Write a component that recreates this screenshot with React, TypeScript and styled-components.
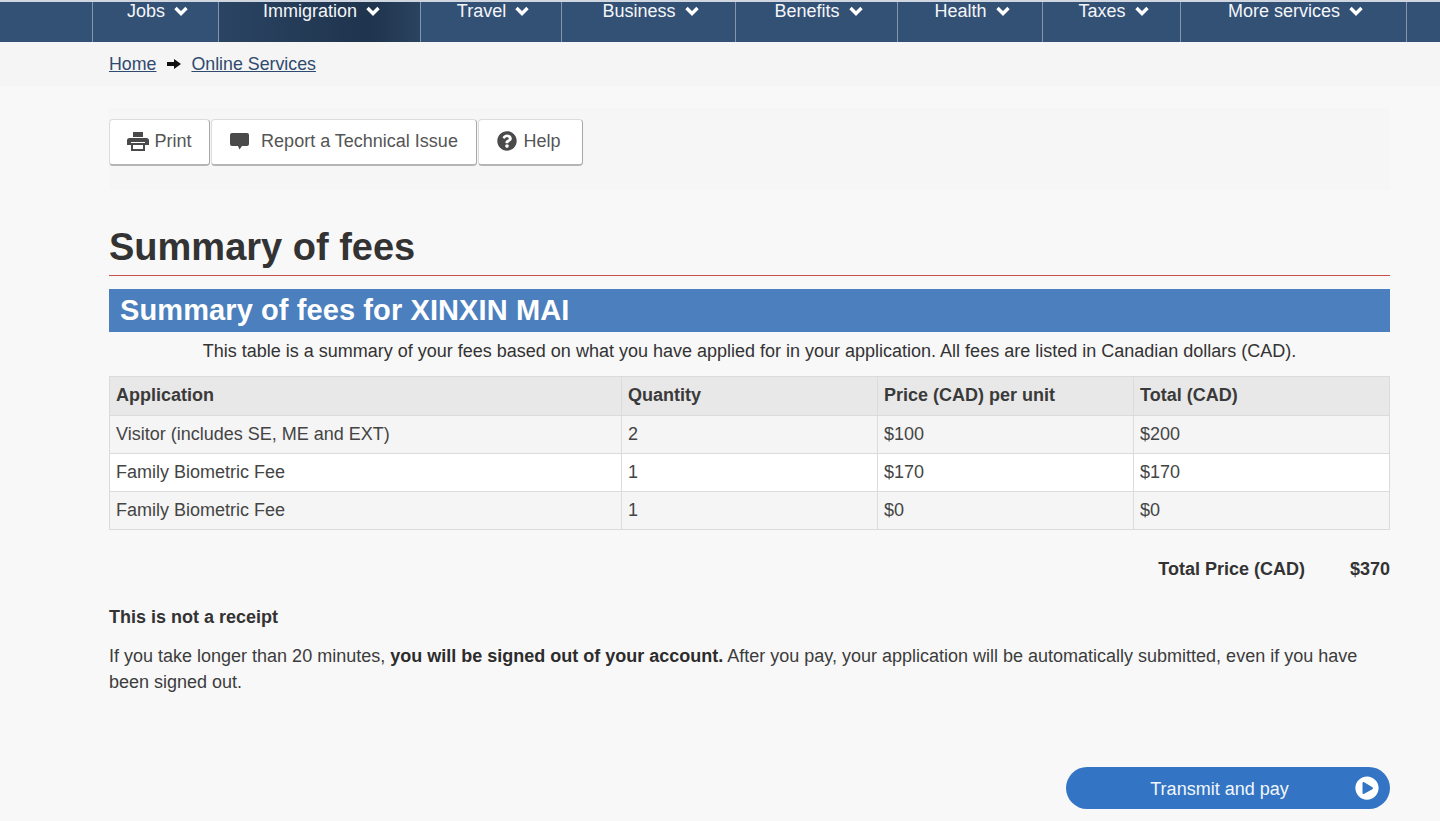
import React from 'react';
import styled, { createGlobalStyle } from 'styled-components';
import { FaPlayCircle, FaQuestionCircle } from 'react-icons/fa';

const GlobalStyle = createGlobalStyle`
  html, body {
    margin: 0;
    padding: 0;
    background: #f8f8f8;
    font-family: "Liberation Sans", Arial, sans-serif;
    color: #333;
  }
`;

const Page = styled.div`
  width: 1440px;
  height: 821px;
  overflow: hidden;
`;

const Nav = styled.nav`
  display: flex;
  height: 40px;
  padding-left: 92px;
  background: #335075;
  border-top: 2px solid #cfd6df;
  border-bottom: 1px solid #c9d8ea;
  margin-bottom: -1px;
`;

const NavItem = styled.a<{ $w: number; $active?: boolean }>`
  display: flex;
  justify-content: center;
  gap: 9px;
  box-sizing: border-box;
  width: ${(p) => p.$w}px;
  padding-left: 4px;
  line-height: 18px;
  font-size: 18px;
  color: #f4f6f9;
  border-left: 1px solid #8496ad;
  background: ${(p) =>
    p.$active ? 'linear-gradient(90deg, #2a4463, #1f344d 75%, #2a4360)' : 'transparent'};

  svg {
    margin-top: 4px;
  }
`;

const NavEnd = styled.span`
  border-left: 1px solid #8496ad;
`;

const Crumbs = styled.div`
  display: flex;
  align-items: center;
  height: 44px;
  padding-left: 109px;
  background: #f5f5f5;
  font-size: 17.8px;

  a {
    color: #2f4a6e;
    text-decoration: underline;
  }

  svg {
    margin: 0 10px 0 11px;
  }
`;

const Main = styled.main`
  width: 1281px;
  margin-left: 109px;
`;

const ToolBand = styled.div`
  display: flex;
  height: 82px;
  margin-top: 22px;
  padding-top: 11px;
  box-sizing: border-box;
  background: #f6f6f6;
`;

const ToolButton = styled.button<{ $w: number; $gap?: number; $shift?: number }>`
  display: flex;
  align-items: center;
  justify-content: center;
  gap: ${(p) => p.$gap ?? 5}px;
  width: ${(p) => p.$w}px;
  height: 47px;
  margin-right: 1px;
  padding: 0 ${(p) => p.$shift ?? 0}px 2px 0;
  background: #fff;
  border: 1px solid #dcdcdc;
  border-bottom: 2px solid #b5b5b5;
  border-right: 1px solid #a8a8a8;
  border-radius: 4px;
  font: 18px "Liberation Sans", Arial, sans-serif;
  color: #555;

  svg {
    color: #4a4a4a;
    flex: none;
  }
`;

const Title = styled.h1`
  margin: 35px 0 0;
  height: 50px;
  font-size: 38px;
  line-height: 44px;
  font-weight: 700;
  color: #333;
  border-bottom: 1px solid #c8524a;
`;

const Banner = styled.h2`
  margin: 13px 0 0;
  height: 43px;
  padding-left: 11px;
  background: #4c7fbd;
  color: #fff;
  font-size: 29px;
  line-height: 43px;
  font-weight: 700;
  letter-spacing: 0.1px;
`;

const Lead = styled.p`
  margin: 0;
  height: 44px;
  text-align: center;
  font-size: 18px;
  line-height: 38px;
  color: #333;
`;

const FeeTable = styled.table`
  width: 1280px;
  table-layout: fixed;
  border-collapse: collapse;
  font-size: 18px;

  th, td {
    height: 37px;
    padding: 0 5px 0 6px;
    text-align: left;
    border: 1px solid #dbdbdb;
    color: #444;
  }

  th {
    height: 36px;
    padding-bottom: 2px;
    background: #e8e8e8;
    color: #3a3a3a;
    font-weight: 700;
  }

  tbody tr:nth-child(odd) td {
    background: #f5f5f5;
  }

  tbody tr:nth-child(even) td {
    background: #fff;
  }
`;

const Total = styled.div`
  display: flex;
  justify-content: flex-end;
  gap: 45px;
  margin-top: 28px;
  font-size: 18px;
  line-height: 22px;
  font-weight: 700;
`;

const Notice = styled.h3`
  margin: 26px 0 0;
  font-size: 18px;
  line-height: 22px;
  font-weight: 700;
`;

const Body = styled.p`
  margin: 15px 0 0;
  font-size: 18px;
  line-height: 26px;
  color: #3c3c3c;

  b {
    color: #2c2c2c;
  }
`;

const PayRow = styled.div`
  display: flex;
  justify-content: flex-end;
  margin-top: 72px;
`;

const PayButton = styled.button`
  position: relative;
  width: 324px;
  height: 42px;
  padding: 2px 17px 0 0;
  border: none;
  border-radius: 21px;
  background: #3375c4;
  color: #f2f6fb;
  font: 18px "Liberation Sans", Arial, sans-serif;

  svg {
    position: absolute;
    top: 9px;
    right: 11px;
    width: 24px;
    height: 24px;
    color: #fff;
  }
`;

const Chevron = () => (
  <svg width="14" height="10" viewBox="0 0 14 10" fill="none" stroke="#fff" strokeWidth="3.4">
    <path d="M1.500 2 7 7.500 12.500 2" />
  </svg>
);

const CrumbArrow = () => (
  <svg width="14" height="12" viewBox="0 0 14 12" fill="#111">
    <path d="M0 4h7V1l7 5-7 5V8H0z" />
  </svg>
);

const PrintIcon = () => (
  <svg width="22" height="20" viewBox="0 0 22 20" fill="currentColor">
    <path d="M6 1h10v5H6z" />
    <path d="M2.500 7h17A2.500 2.500 0 0 1 22 9.500V14h-4v-3H4v3H0V9.500A2.500 2.500 0 0 1 2.500 7z" />
    <path d="M4 12h14v8H4zm2 2v4h10v-4z" fillRule="evenodd" />
  </svg>
);

const CommentIcon = () => (
  <svg width="19" height="18" viewBox="0 0 19 18" fill="currentColor">
    <path d="M2 1h15a2 2 0 0 1 2 2v9a2 2 0 0 1-2 2h-5l-2.500 3.500L8 14H2a2 2 0 0 1-2-2V3a2 2 0 0 1 2-2z" />
  </svg>
);

const navItems = [
  { label: 'Jobs', w: 126 },
  { label: 'Immigration', w: 202, active: true },
  { label: 'Travel', w: 141 },
  { label: 'Business', w: 174 },
  { label: 'Benefits', w: 162 },
  { label: 'Health', w: 145 },
  { label: 'Taxes', w: 138 },
  { label: 'More services', w: 226 },
];

const rows = [
  ['Visitor (includes SE, ME and EXT)', '2', '$100', '$200'],
  ['Family Biometric Fee', '1', '$170', '$170'],
  ['Family Biometric Fee', '1', '$0', '$0'],
];

export default function App() {
  return (
    <Page>
      <GlobalStyle />
      <Nav>
        {navItems.map((item) => (
          <NavItem key={item.label} $w={item.w} $active={item.active}>
            {item.label}
            <Chevron />
          </NavItem>
        ))}
        <NavEnd />
      </Nav>
      <Crumbs>
        <a>Home</a>
        <CrumbArrow />
        <a>Online Services</a>
      </Crumbs>
      <Main>
        <ToolBand>
          <ToolButton $w={101}>
            <PrintIcon />
            Print
          </ToolButton>
          <ToolButton $w={266} $gap={12}>
            <CommentIcon />
            Report a Technical Issue
          </ToolButton>
          <ToolButton $w={105} $gap={6} $shift={3}>
            <FaQuestionCircle size={20} />
            Help
          </ToolButton>
        </ToolBand>
        <Title>Summary of fees</Title>
        <Banner>Summary of fees for XINXIN MAI</Banner>
        <Lead>
          This table is a summary of your fees based on what you have applied for in your
          application. All fees are listed in Canadian dollars (CAD).
        </Lead>
        <FeeTable>
          <colgroup>
            <col width="512" />
            <col width="256" />
            <col width="256" />
            <col width="256" />
          </colgroup>
          <thead>
            <tr>
              <th>Application</th>
              <th>Quantity</th>
              <th>Price (CAD) per unit</th>
              <th>Total (CAD)</th>
            </tr>
          </thead>
          <tbody>
            {rows.map((row, i) => (
              <tr key={i}>
                {row.map((cell, j) => (
                  <td key={j}>{cell}</td>
                ))}
              </tr>
            ))}
          </tbody>
        </FeeTable>
        <Total>
          <span>Total Price (CAD)</span>
          <span>$370</span>
        </Total>
        <Notice>This is not a receipt</Notice>
        <Body>
          If you take longer than 20 minutes, <b>you will be signed out of your account.</b> After
          you pay, your application will be automatically submitted, even if you have been signed
          out.
        </Body>
        <PayRow>
          <PayButton>
            Transmit and pay
            <FaPlayCircle />
          </PayButton>
        </PayRow>
      </Main>
    </Page>
  );
}
